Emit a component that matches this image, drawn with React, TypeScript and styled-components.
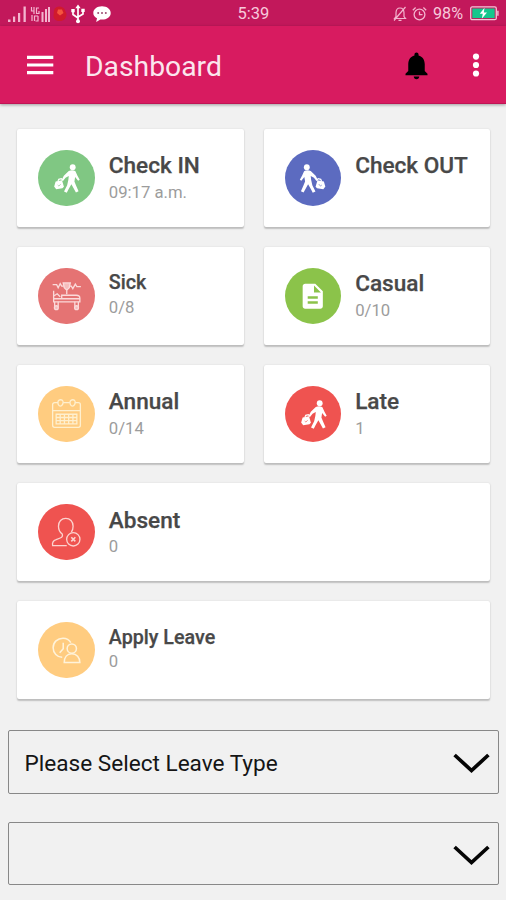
import React from 'react';
import styled, { createGlobalStyle } from 'styled-components';

const GlobalStyle = createGlobalStyle`
  * { box-sizing: border-box; }
  body { margin: 0; background: #f1f1f1; font-family: Roboto, sans-serif; }
  svg { display: block; flex: none; }
`;

const Screen = styled.div`
  width: 506px;
  height: 900px;
  overflow: hidden;
  background: #f1f1f1;
`;

const StatusBar = styled.header`
  display: grid;
  grid-template-columns: 1fr auto 1fr;
  align-items: center;
  height: 26px;
  padding: 0 7px 0 8px;
  background: #c2185b;
  color: #f7c9dc;
`;

const StatusGroup = styled.div<{ $end?: boolean }>`
  display: flex;
  align-items: center;
  justify-content: ${(p) => (p.$end ? 'flex-end' : 'flex-start')};
`;

const Clock = styled.span`
  font-size: 16.5px;
  line-height: 26px;
  padding-top: 1px;
`;

const Percent = styled.span`
  font-size: 16.2px;
  line-height: 25px;
  margin: 0 7px 0 6px;
`;

const AppBar = styled.nav`
  display: flex;
  align-items: center;
  height: 78px;
  padding: 0 26px 0 27px;
  background: #d81b60;
  border-bottom: 1px solid #c01455;
  box-shadow: 0 1px 3px rgba(0, 0, 0, 0.35);
`;

const Title = styled.h1`
  flex: 1;
  margin: 5px 0 0 31px;
  color: #fbe6ee;
  font-size: 28.3px;
  font-weight: 400;
  line-height: 34px;
`;

const BellIcon = styled.svg`
  margin: 2px 39px 0 0;
`;

const CardGrid = styled.main`
  display: grid;
  grid-template-columns: 1fr 1fr;
  grid-auto-rows: 98px;
  gap: 20.1px 20px;
  padding: 24.5px 16px 0 17.3px;
`;

const Card = styled.section<{ $wide?: boolean }>`
  display: flex;
  grid-column: ${(p) => (p.$wide ? '1 / -1' : 'auto')};
  padding: 21px 21px 0;
  background: #fff;
  border-radius: 2px;
  box-shadow: 0 1.5px 1.5px rgba(0, 0, 0, 0.2), 0 0 2px rgba(0, 0, 0, 0.1);
`;

const Disc = styled.div<{ $color: string }>`
  flex: none;
  width: 56.5px;
  height: 56.5px;
  border-radius: 50%;
  background: ${(p) => p.$color};
`;

const CardText = styled.div`
  padding: 3.8px 0 0 14px;
`;

const Label = styled.h2<{ $small?: boolean }>`
  margin: 0;
  color: #484848;
  font-size: ${(p) => (p.$small ? '19.7px' : '22.6px')};
  font-weight: 500;
  line-height: ${(p) => (p.$small ? '23px' : '26px')};
  -webkit-text-stroke: 0.25px #484848;
`;

const Value = styled.p`
  margin: 3.4px 0 0;
  color: #9c9c9c;
  font-size: 16.7px;
  line-height: 20px;
`;

const Selects = styled.div`
  display: flex;
  flex-direction: column;
  gap: 28px;
  padding: 31.3px 7px 0 8px;
`;

const Select = styled.div`
  display: flex;
  align-items: center;
  justify-content: space-between;
  height: 63.5px;
  padding: 3px 8px 0 15.5px;
  border: 1.5px solid #888;
  border-radius: 2px;
  color: #151515;
  font-size: 22.6px;
`;

const Signal = ({ lte }: { lte?: boolean }) => (
  <svg width={lte ? 21 : 20} height="18" viewBox={lte ? '0 0 21 18' : '0 0 20 18'}>
    {lte ? (
      <g fill="none" stroke="#f3b4cf" strokeWidth="1.2">
        <path d="M1.5 2v4h3M4 2v7M9 3H6.5v5.5H9V6M2 10v6M4.5 16v-5H8M8 11v5H5.5" />
        <path d="M12.5 7v10M16 4v13M19 2v15" strokeWidth="2" />
      </g>
    ) : (
      <path fill="#f3b4cf" d="M0 14.5h2.5V17H0zM5 11.5h2.2V17H5zM10 8h2.2v9H10zM15.5 1.5h2.3V17h-2.3z" />
    )}
  </svg>
);

const RedBlob = () => (
  <svg width="14" height="18" viewBox="0 0 14 18">
    <path d="M1 5C3 .5 9 .5 11.500 4l2 5c0 4.500-3 7-6.500 7-4.500 0-6.500-2-6.500-5.500z" fill="#d01a2c" />
    <path d="M5 4.500l4 0 1.500 3.500-3.500 2.500-3-2.500z" fill="#f4553f" />
  </svg>
);

const Usb = () => (
  <svg width="14" height="20" viewBox="0 0 14 20">
    <g fill="none" stroke="#fff" strokeWidth="1.7">
      <path d="M7 3v14M2 7v3.5L7 14M12 6.5V10l-5 3" />
    </g>
    <path d="M4.3 4.3 7 .6l2.7 3.7zM.3 5h3.4v3.2H.3zM10.3 4.8h3.4v3.2h-3.4z" fill="#fff" />
    <circle cx="7" cy="17.3" r="2" fill="#fff" />
  </svg>
);

const Chat = () => (
  <svg width="18" height="18" viewBox="0 0 18 18">
    <path d="M9 1.200c5 0 8.700 2.900 8.700 6.700S14 14.600 9 14.600l-1.600-.1-4.200 2.500.8-3.700C1.600 12 .3 10.200 .3 7.900.3 4.100 4 1.200 9 1.200z" fill="#fff" />
    <g fill="#9b4a70">
      <circle cx="5.200" cy="8" r="1" />
      <circle cx="9" cy="8" r="1" />
      <circle cx="12.800" cy="8" r="1" />
    </g>
  </svg>
);

const Muted = () => (
  <svg width="14" height="16" viewBox="0 0 14 16" fill="none" stroke="#f3b4cf" strokeWidth="1.200">
    <path d="M1.500 12.500 3 10.500V7c0-3 1.500-5 4-5s4 2 4 5v3.500l1.500 2zM5.500 14.300h3M12.500 1 1 14.500" />
  </svg>
);

const Alarm = () => (
  <svg width="15" height="16" viewBox="0 0 15 16" fill="none" stroke="#f3b4cf" strokeWidth="1.300">
    <circle cx="7.500" cy="8.500" r="5.400" />
    <path d="M7.500 5.500v3.200h3M.8 4.200 3.600 1.600M14.200 4.200l-2.800-2.600" />
  </svg>
);

const Battery = () => (
  <svg width="29" height="15" viewBox="0 0 29 15">
    <rect x=".7" y=".9" width="25.600" height="12.800" rx="1.500" fill="none" stroke="#f3c3d6" strokeWidth="1.300" />
    <rect x="2.300" y="2.500" width="22.400" height="9.600" fill="#15c78c" />
    <path d="M27.200 4.800h1.400v5h-1.400z" fill="#f3c3d6" />
    <path d="m14.500 1.800-4.700 6h3l-1 5 5.200-6.200h-3.200z" fill="#fff" />
  </svg>
);

const Traveller = ({ flip, bag }: { flip?: boolean; bag: string }) => (
  <svg width="56.500" height="56.500" viewBox="0 0 56 56">
    <g transform={flip ? 'matrix(-1 0 0 1 56 0)' : undefined}>
      <circle cx="34.400" cy="17" r="2.900" fill="#fff" />
      <path
        fill="#fff"
        d="M30.500 20.800c2-.8 5-.9 6.600.2l1.900 4.200 2.300 4.200-1.500 1.100-3-3.700-.7 4.500 1.600 4 2.500 5.600-2.600 1.200-4.500-8.200-2.700 4.700-1.900 3.800-2.700-1.200 3.100-6.300 1.200-5.300.4-3.800-3.200 1.800-2.500 3.100-1.500-.8 2.300-4.400z"
      />
      <path d="M19.800 30.800l.8-1.700 2.500-.7 1.300 1.500" fill="none" stroke="#fff" strokeWidth="1.200" />
      <path d="m17.500 31.300 6.300-1.300 1.900 6.400-1.500 1.600-6.200 1-2-2.800z" fill="#fff" />
      <path d="m19.500 34.700 1.300 1.100 1.700-2" fill="none" stroke={bag} strokeWidth=".6" />
    </g>
  </svg>
);

const SickBed = () => (
  <svg width="56.500" height="56.500" viewBox="0 0 56 56" fill="none" stroke="#fbdada" strokeWidth="1.300">
    <path d="M14.500 16.500h4l1.500 3 2-4 1.500 2.500h2M31 18h2l1.500 2.500 2.500-4.500 1.500 2.500h4" />
    <path d="M25 14.800h7l-1 4.700-2.500 2.500-2.500-2.500z" fill="#f5bcbc" />
    <path d="M28.500 22v4" />
    <path d="M15.500 22.500v11h26V30c0-2-1.500-3-3.500-3H23.500v3.500h-8M24 30.500h17M16 27.500l3-2 3 3" />
    <path d="M16.500 33.500v5M20 33.500v5M36.500 33.500v5M40 33.500v5" />
    <circle cx="18.200" cy="39.300" r="1.900" fill="#f5bcbc" />
    <circle cx="38.200" cy="39.300" r="1.900" fill="#f5bcbc" />
  </svg>
);

const Document = () => (
  <svg width="56.500" height="56.500" viewBox="0 0 56 56">
    <path
      transform="translate(12.500 13) scale(1.250)"
      fill="#fff"
      d="M14 2H6c-1.100 0-1.990.9-1.990 2L4 20c0 1.100.89 2 1.990 2H18c1.100 0 2-.9 2-2V8l-6-6zm2 16H8v-2h8v2zm0-4H8v-2h8v2zm-3-5V3.500L18.500 9H13z"
    />
  </svg>
);

const Calendar = () => (
  <svg width="56.500" height="56.500" viewBox="0 0 56 56" fill="none" stroke="#fff0cf" strokeWidth="1.300">
    <path d="M20 16.500h-3.500c-1.200 0-2 .8-2 2V39c0 1.200.8 2 2 2H40c1.200 0 2-.8 2-2V18.500c0-1.200-.8-2-2-2h-3.500M25 16.500h6.500M14.500 24.500H42" />
    <path d="M20 15c1-1.800 4-1.800 4.700 0 .8 2-.8 5-2.500 5S19 17 20 15zM32 15c1-1.800 4-1.800 4.700 0 .8 2-.8 5-2.500 5S31 17 32 15z" />
    <path d="M18 28h20.500v9.500H18zM18 31.200h20.500M18 34.400h20.500M22 27.500v10.500M26.200 27.500v10.500M30.400 27.500v10.500M34.600 27.500v10.500" />
  </svg>
);

const AbsentUser = () => (
  <svg width="56.500" height="56.500" viewBox="0 0 56 56" fill="none" stroke="#fcd3cf" strokeWidth="1.300">
    <path d="M28.500 41.200H14.500c-.6-3 .5-5 3.500-6l4-1.500c2-.8 2.700-2 2-4-2.300-1.700-3.700-4.200-3.700-7.700 0-4.800 3-7.800 7.200-7.800s7.300 3 7.300 7.800c0 2.300-.6 4.200-1.700 5.800" />
    <circle cx="35" cy="35" r="6.600" />
    <path d="m33 33 4 4M37 33l-4 4" strokeWidth="1.600" />
  </svg>
);

const LeaveClock = () => (
  <svg width="56.500" height="56.500" viewBox="0 0 56 56" fill="none" stroke="#fff3da" strokeWidth="1.500">
    <path d="M32.500 20.500c-1.500-2.800-4.300-4.500-7.700-4.500-5.500 0-9.800 4-9.800 9.500 0 5.300 4 9.300 9 9.500M25 20.500v6l-3.500 4" />
    <circle cx="33.500" cy="26.300" r="4.600" />
    <path d="M26 40.200c0-5.200 2.700-8.700 7.500-8.700s8 3.500 8 8.700z" />
  </svg>
);

const Chevron = () => (
  <svg width="37" height="24" viewBox="0 0 37 24">
    <path d="M1.600 4 18.500 19.500 35.400 4" fill="none" stroke="#050505" strokeWidth="3.700" />
  </svg>
);

interface Item {
  label: string;
  value: string;
  color: string;
  icon: React.ReactNode;
  small?: boolean;
  wide?: boolean;
}

const items: Item[] = [
  { label: 'Check IN', value: '09:17 a.m.', color: '#80c783', icon: <Traveller bag="#80c783" /> },
  { label: 'Check OUT', value: '', color: '#5c6bc0', icon: <Traveller flip bag="#5c6bc0" /> },
  { label: 'Sick', value: '0/8', color: '#e57373', icon: <SickBed />, small: true },
  { label: 'Casual', value: '0/10', color: '#8bc34a', icon: <Document /> },
  { label: 'Annual', value: '0/14', color: '#ffcc80', icon: <Calendar /> },
  { label: 'Late', value: '1', color: '#ef5350', icon: <Traveller bag="#ef5350" /> },
  { label: 'Absent', value: '0', color: '#ef5350', icon: <AbsentUser />, wide: true },
  { label: 'Apply Leave', value: '0', color: '#ffcc80', icon: <LeaveClock />, small: true, wide: true },
];

const SignalGroup = styled(StatusGroup)`
  gap: 2px;
`;

const NoticeGroup = styled(StatusGroup)`
  gap: 8px;
  margin-left: 4px;
`;

const AlertGroup = styled(StatusGroup)`
  gap: 5px;
`;

export default function App() {
  return (
    <Screen>
      <GlobalStyle />
      <StatusBar>
        <StatusGroup>
          <SignalGroup>
            <Signal />
            <Signal lte />
            <RedBlob />
          </SignalGroup>
          <NoticeGroup>
            <Usb />
            <Chat />
          </NoticeGroup>
        </StatusGroup>
        <Clock>5:39</Clock>
        <StatusGroup $end>
          <AlertGroup>
            <Muted />
            <Alarm />
          </AlertGroup>
          <Percent>98%</Percent>
          <Battery />
        </StatusGroup>
      </StatusBar>
      <AppBar>
        <svg width="27" height="22" viewBox="0 0 27 22">
          <path d="M0 3.300h26.300M0 11h26.300M0 18.700h26.300" stroke="#fff" strokeWidth="3.200" />
        </svg>
        <Title>Dashboard</Title>
        <BellIcon width="33" height="33" viewBox="0 0 24 24">
          <path d="M12 22c1.100 0 2-.9 2-2h-4c0 1.100.89 2 2 2zm6-6v-5c0-3.070-1.640-5.640-4.500-6.320V4c0-.83-.67-1.500-1.500-1.500s-1.500.67-1.500 1.500v.68C7.630 5.360 6 7.920 6 11v5l-2 2v1h16v-1l-2-2z" />
        </BellIcon>
        <svg width="8" height="26" viewBox="0 0 8 26" fill="#fff">
          <circle cx="4" cy="4.600" r="3.100" />
          <circle cx="4" cy="13" r="3.100" />
          <circle cx="4" cy="21.500" r="3.100" />
        </svg>
      </AppBar>
      <CardGrid>
        {items.map((item) => (
          <Card key={item.label} $wide={item.wide}>
            <Disc $color={item.color}>{item.icon}</Disc>
            <CardText>
              <Label $small={item.small}>{item.label}</Label>
              {item.value && <Value>{item.value}</Value>}
            </CardText>
          </Card>
        ))}
      </CardGrid>
      <Selects>
        <Select>
          <span>Please Select Leave Type</span>
          <Chevron />
        </Select>
        <Select>
          <span />
          <Chevron />
        </Select>
      </Selects>
    </Screen>
  );
}
